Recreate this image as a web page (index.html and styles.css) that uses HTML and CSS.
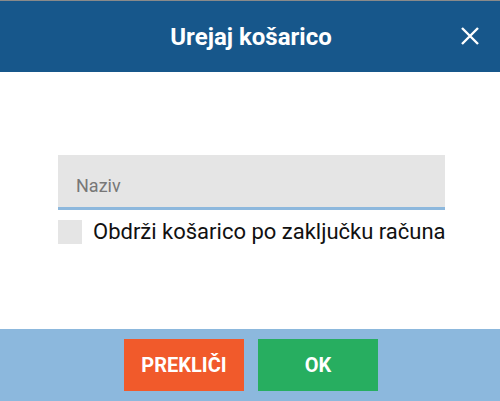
FILE: index.html
```html
<!DOCTYPE html>
<html lang="sl">
<head>
    <meta charset="UTF-8">
    <meta name="viewport" content="width=device-width, initial-scale=1.0">
    <title>Urejaj košarico</title>
    <link rel="stylesheet" href="styles.css">
</head>
<body>
    <div class="dialog">
        <div class="dialog-header">
            <h1>Urejaj košarico</h1>
            <button class="close-btn" aria-label="Zapri">
                <svg width="20" height="20" viewBox="0 0 20 20">
                    <path d="M2 2 L18 18 M18 2 L2 18" stroke="#fff" stroke-width="2.4" fill="none"/>
                </svg>
            </button>
        </div>

        <div class="dialog-body">
            <input type="text" class="name-input" placeholder="Naziv">
            <label class="check-row">
                <span class="check-box"></span>
                <span>Obdrži košarico po zaključku računa</span>
            </label>
        </div>

        <div class="dialog-footer">
            <button class="btn btn-cancel">PREKLIČI</button>
            <button class="btn btn-ok">OK</button>
        </div>
    </div>
</body>
</html>
```

FILE: styles.css
```css
body {
    margin: 0;
    font-family: Roboto, 'Liberation Sans', sans-serif;
    background-color: white;
}

.dialog {
    height: 401px;
    display: flex;
    flex-direction: column;
    border-top: 1px solid #8a8a8a;
    box-sizing: border-box;
}

.dialog-header {
    height: 71px;
    background-color: #17578b;
    display: flex;
    align-items: center;
    justify-content: center;
    position: relative;
}

.dialog-header h1 {
    margin: 0;
    color: white;
    font-size: 24px;
    font-weight: bold;
    padding-left: 2px;
}

.close-btn {
    position: absolute;
    right: 20px;
    top: 25px;
    background: none;
    border: none;
    padding: 0;
    width: 20px;
    height: 20px;
    cursor: pointer;
}

.dialog-body {
    flex: 1;
    padding: 83px 55px 0 58px;
}

.name-input {
    display: block;
    width: 100%;
    box-sizing: border-box;
    height: 55px;
    border: none;
    border-bottom: 3px solid #8db8dd;
    background-color: #e5e5e5;
    padding: 9px 18px 0;
    font-family: Roboto, 'Liberation Sans', sans-serif;
    font-size: 18px;
    color: #333;
    outline: none;
}

.name-input::placeholder {
    color: #777;
}

.check-row {
    display: flex;
    align-items: center;
    gap: 11px;
    margin-top: 9px;
    font-size: 22px;
    color: #111;
    white-space: nowrap;
}

.check-box {
    flex: none;
    width: 24px;
    height: 24px;
    background-color: #e5e5e5;
}

.dialog-footer {
    height: 72px;
    background-color: #8cb8dd;
    display: flex;
    justify-content: center;
    gap: 14px;
    padding-top: 10px;
    box-sizing: border-box;
    padding-left: 2px;
}

.btn {
    width: 120px;
    height: 52px;
    border: none;
    color: white;
    font-family: Roboto, 'Liberation Sans', sans-serif;
    font-size: 20px;
    font-weight: bold;
    cursor: pointer;
}

.btn-cancel {
    background-color: #f15a2b;
}

.btn-ok {
    background-color: #27ae60;
}
```
